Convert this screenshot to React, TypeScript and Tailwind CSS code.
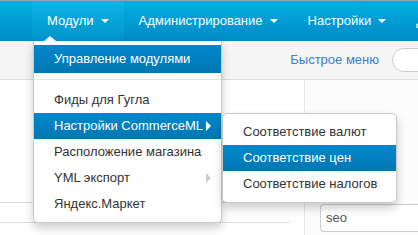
import React from "react";

// Admin top bar with the "Модули" dropdown opened and the CommerceML submenu flyout.

const navItems = ["Модули", "Администрирование", "Настройки", "Дополнительно"];

function Caret() {
  return (
    <span className="ml-[7px] inline-block h-0 w-0 border-x-[4px] border-t-[4px] border-x-transparent border-t-white" />
  );
}

function MenuItem({
  label,
  active = false,
  arrow,
  tall = false,
}: {
  label: string;
  active?: boolean;
  arrow?: "white" | "gray";
  tall?: boolean;
}) {
  return (
    <div
      className={`flex items-center justify-between pl-[20px] pr-[10px] ${tall ? "h-[28px]" : "h-[26px]"} ${
        active ? "bg-gradient-to-b from-[#0088cc] to-[#0077b3] text-white" : "text-[#333]"
      }`}
    >
      <span>{label}</span>
      {arrow && (
        <span
          className={`h-0 w-0 border-y-[5px] border-l-[5px] border-y-transparent ${
            arrow === "white" ? "border-l-white" : "border-l-[#ccc]"
          }`}
        />
      )}
    </div>
  );
}

export default function App() {
  return (
    <div
      className="relative h-[235px] w-[418px] overflow-hidden bg-white text-[13px]"
      style={{ fontFamily: '"Liberation Sans", Arial, sans-serif' }}
    >
      {/* ── Navbar ── */}
      <nav className="flex h-[41px] border-t border-[#8fa3b0] bg-gradient-to-b from-[#00b0e2] to-[#008ac6] text-[13px] text-white">
        <div className="w-[32px] shrink-0" />
        {navItems.map((item, i) => (
          <div
            key={item}
            className={`flex shrink-0 items-center px-[15px] ${
              i === 0 ? "bg-gradient-to-b from-[#0db5e6] to-[#0094cb]" : ""
            }`}
          >
            <span className="whitespace-nowrap">{item}</span>
            <Caret />
          </div>
        ))}
      </nav>

      {/* ── Toolbar band ── */}
      <div className="flex h-[39px] items-center justify-end border-b border-[#dddddd] bg-[#f5f5f5]">
        <a className="mr-[13px] whitespace-nowrap text-[#3a7fcf]">Быстрое меню</a>
        <div className="-mr-[40px] h-[24px] w-[66px] rounded-full border border-[#cccccc] bg-white" />
      </div>

      {/* ── Page body ── */}
      <div className="flex h-[155px]">
        <div className="flex w-[290px] flex-col">
          <div className="h-[122px]" />
          <div className="h-[20px] border-t border-[#dddddd]" />
          <div className="border-t border-[#dddddd]" />
        </div>
        <div className="ml-[14px] flex-1 border-l border-[#e8e8e8] bg-[#fcfcfc] pl-[15px]">
          <div className="mt-[124px] flex h-[28px] items-center rounded-l-[4px] border border-r-0 border-[#cccccc] bg-white pl-[5px] text-[#555]">
            seo
          </div>
        </div>
      </div>

      {/* ── Opened dropdown ── */}
      <div className="absolute left-[33px] top-[41px] w-[189px] rounded-b-[5px] border border-t-0 border-[#c8c8c8] bg-white pb-[5px] pt-[4px] shadow-[0_5px_10px_rgba(0,0,0,0.2)]">
        <span className="absolute -top-[5px] left-[10px] h-0 w-0 border-x-[6px] border-b-[5px] border-x-transparent border-b-white" />
        <MenuItem label="Управление модулями" active tall />
        <div className="my-[6px] border-b border-white bg-[#e5e5e5] pt-px" />
        <MenuItem label="Фиды для Гугла" />
        <MenuItem label="Настройки CommerceML" active arrow="white" />
        <MenuItem label="Расположение магазина" />
        <MenuItem label="YML экспорт" arrow="gray" />
        <MenuItem label="Яндекс.Маркет" />
      </div>

      {/* ── Submenu flyout ── */}
      <div className="absolute left-[222px] top-[113px] w-[175px] rounded-[5px] border border-[#c8c8c8] bg-white py-[5px] shadow-[0_5px_10px_rgba(0,0,0,0.2)]">
        <MenuItem label="Соответствие валют" />
        <MenuItem label="Соответствие цен" active />
        <MenuItem label="Соответствие налогов" />
      </div>
    </div>
  );
}
